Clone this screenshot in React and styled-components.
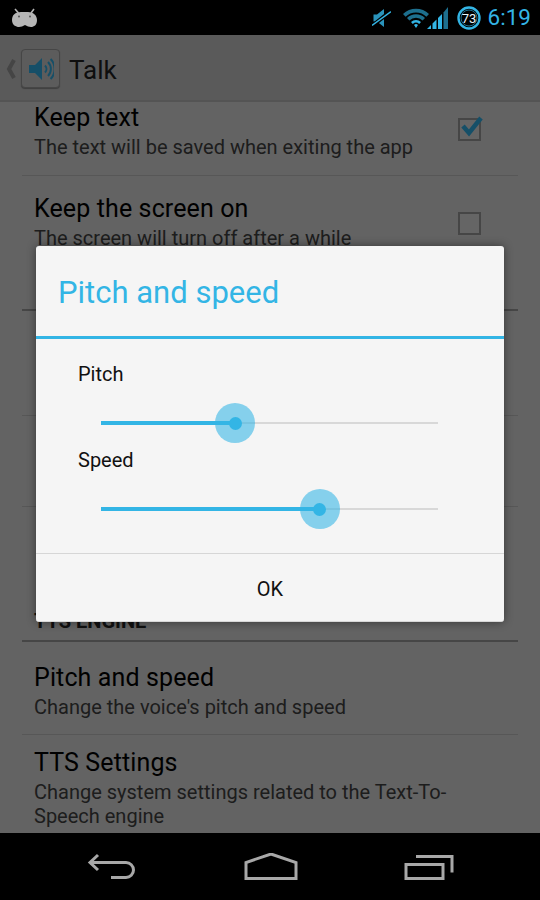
import React from 'react'
import styled, { createGlobalStyle } from 'styled-components'

const BLUE = '#33b5e5'

const GlobalStyle = createGlobalStyle`
  html, body {
    margin: 0;
    padding: 0;
    background: #000;
  }
  * {
    box-sizing: border-box;
  }
`

const Phone = styled.div`
  width: 540px;
  height: 900px;
  display: flex;
  flex-direction: column;
  overflow: hidden;
  font-family: Roboto, "Liberation Sans", sans-serif;
  color: #000;
`

const StatusBar = styled.div`
  flex: none;
  height: 35px;
  background: #000;
  display: flex;
  align-items: center;
  padding: 0 9px 0 12px;
`

const StatusIcons = styled.div`
  margin-left: auto;
  display: flex;
  align-items: center;
`

const StatusGlyph = styled.svg`
  display: block;
  flex: none;
  margin-left: ${(p) => p.$gap || 0}px;
`

const Clock = styled.span`
  margin-left: 7px;
  font-size: 22.5px;
  line-height: 35px;
  color: ${BLUE};
`

const Screen = styled.div`
  flex: 1;
  min-height: 0;
  position: relative;
  display: flex;
  flex-direction: column;
  background: #c6c6c6;
`

const ActionBar = styled.div`
  flex: none;
  height: 67px;
  display: flex;
  align-items: center;
  padding: 2px 0 0 6px;
  background: #b4b4b4;
  border-bottom: 2px solid #a8a8a8;
`

const UpChevron = styled.svg`
  display: block;
  flex: none;
  margin-right: 5px;
`

const AppIcon = styled.div`
  width: 39px;
  height: 39px;
  flex: none;
  display: flex;
  align-items: center;
  justify-content: center;
  background: #b8b8b8;
  border: 1px solid #8c8c8c;
  border-radius: 4px;
  box-shadow: 0 1px 1px rgba(0, 0, 0, 0.3);
`

const AppTitle = styled.div`
  margin-left: 9px;
  padding-top: 2px;
  font-size: 26px;
  color: #1c1c1c;
`

const List = styled.div`
  flex: 1;
  min-height: 0;
  overflow: hidden;
  padding: 0 22px;
`

const ScrolledContent = styled.div`
  margin-top: -17px;
`

const Row = styled.div`
  display: flex;
  align-items: flex-start;
  height: ${(p) => p.$height}px;
  padding: ${(p) => p.$top}px 12px 0;
  border-bottom: 1px solid ${(p) => (p.$last ? 'transparent' : '#aeaeae')};
`

const RowText = styled.div`
  flex: 1;
  min-width: 0;
`

const RowTitle = styled.div`
  font-size: 25px;
  letter-spacing: 0.12px;
  line-height: 34px;
`

const RowSub = styled.div`
  font-size: 20px;
  line-height: 24px;
  color: #3a3a3a;
  max-width: 440px;
`

const CheckBox = styled.div`
  position: relative;
  flex: none;
  width: 23px;
  height: 23px;
  margin: ${(p) => p.$top}px 25px 0 0;
  border: 2px solid #8d8d8d;
  background: rgba(255, 255, 255, 0.08);
`

const CheckMark = styled.svg`
  position: absolute;
  left: 0;
  top: -8px;
`

const SectionHeader = styled.div`
  height: ${(p) => p.$height}px;
  display: flex;
  align-items: flex-end;
  padding: 0 12px 7px;
  font-size: 20px;
  font-weight: 700;
  line-height: 24px;
  color: #222;
  border-bottom: 2px solid #8c8c8c;
`

const Scrim = styled.div`
  position: absolute;
  inset: 0;
  display: flex;
  align-items: center;
  justify-content: center;
  background: rgba(0, 0, 0, 0.5);
`

const Dialog = styled.div`
  width: 468px;
  height: 376px;
  display: flex;
  flex-direction: column;
  background: #f5f5f5;
  border-radius: 3px;
  border-bottom: 1px solid #d8d8d8;
  box-shadow: 0 0 10px rgba(0, 0, 0, 0.45);
`

const DialogTitle = styled.div`
  flex: none;
  height: 93px;
  padding: 3px 22px 0;
  display: flex;
  align-items: center;
  font-size: 31px;
  color: ${BLUE};
  border-bottom: 3px solid ${BLUE};
`

const DialogBody = styled.div`
  flex: 1;
  padding: 21px 66px 0 42px;
  border-bottom: 1px solid #d6d6d6;
`

const SliderLabel = styled.div`
  font-size: 20px;
  line-height: 28px;
  color: #111;
`

const SliderBox = styled.div`
  height: 58px;
  margin-left: 23px;
  padding-top: 34px;
`

const Track = styled.div`
  position: relative;
  width: 100%;
  height: 2px;
  background: #d8d8d8;
`

const TrackFill = styled.div`
  position: absolute;
  left: 0;
  top: -1px;
  height: 4px;
  background: ${BLUE};
`

const Thumb = styled.div`
  position: absolute;
  top: 1px;
  width: 40px;
  height: 40px;
  margin: -20px 0 0 -20px;
  border-radius: 50%;
  background: rgba(51, 181, 229, 0.58);
  display: flex;
  align-items: center;
  justify-content: center;
  &::after {
    content: '';
    width: 13px;
    height: 13px;
    border-radius: 50%;
    background: ${BLUE};
  }
`

const OkButton = styled.div`
  flex: none;
  height: 67px;
  padding-top: 2px;
  display: flex;
  align-items: center;
  justify-content: center;
  font-size: 20px;
  color: #111;
`

const NavBar = styled.div`
  flex: none;
  height: 67px;
  background: #000;
  display: flex;
  align-items: flex-start;
  padding: 20px 0 0 86px;
`

const NavGlyph = styled.svg`
  display: block;
  flex: none;
  margin-left: ${(p) => p.$gap || 0}px;
  fill: none;
  stroke: #a8a8a8;
  stroke-width: 3;
`

const Speaker = () => (
  <svg width="26" height="26" viewBox="0 0 26 26">
    <path d="M1 9h6l7-7v22l-7-7H1z" fill="#2c9fd0" />
    <path d="M17 9.5a5 5 0 0 1 0 7" fill="none" stroke="#2c9fd0" strokeWidth="2" />
    <path d="M20 6a10 10 0 0 1 0 14" fill="none" stroke="#2c9fd0" strokeWidth="2" />
    <path d="M22.6 3a14.5 14.5 0 0 1 0 20" fill="none" stroke="#2c9fd0" strokeWidth="2" />
  </svg>
)

const Slider = ({ label, value }) => (
  <>
    <SliderLabel>{label}</SliderLabel>
    <SliderBox>
      <Track>
        <TrackFill style={{ width: `${value}%` }} />
        <Thumb style={{ left: `${value}%` }} />
      </Track>
    </SliderBox>
  </>
)

const App = () => (
  <Phone>
    <GlobalStyle />
    <StatusBar>
      <StatusGlyph width="26" height="20" viewBox="0 0 26 20">
        <path d="M3 1l3.5 4M22 1l-3 4" stroke="#b5b5b5" strokeWidth="1.6" />
        <path d="M9 4h7c5 0 9 3 9 8s-3 7-6 7c-2 0-4-1-6-2-2 1-4 2-6 2-3 0-7-2-7-7s3-8 9-8z" fill="#b5b5b5" />
        <circle cx="7" cy="8.5" r="1" fill="#555" />
        <circle cx="18" cy="8.5" r="1" fill="#555" />
      </StatusGlyph>
      <StatusIcons>
        <StatusGlyph width="19" height="18" viewBox="0 0 19 18">
          <path d="M1.5 5.5h3.5L12 0v18l-7-5.5H1.5z" fill="#2a93bb" />
          <path d="M0 17L19 2" stroke="#000" strokeWidth="4" />
          <path d="M0 16.5L19 2.5" stroke="#33b5e5" strokeWidth="1.5" />
        </StatusGlyph>
        <StatusGlyph $gap={12} width="26" height="21" viewBox="0 0 26 21">
          <path d="M0 7a18.5 18.5 0 0 1 26 0l-2.6 2.8a14.6 14.6 0 0 0-20.8 0z" fill="#1d6f8e" />
          <path d="M4 11a12.8 12.8 0 0 1 18 0l-2.4 2.5a9.4 9.4 0 0 0-13.2 0z" fill="#1d6f8e" />
          <path d="M8 15a7.4 7.4 0 0 1 10 0l-1.8 1.9a4.8 4.8 0 0 0-6.4 0z" fill="#33b5e5" />
          <path d="M11 18a3 3 0 0 1 4 0l-2 3z" fill="#33b5e5" />
        </StatusGlyph>
        <StatusGlyph $gap={-2} width="22" height="22" viewBox="0 0 22 22">
          <path d="M0 22l4-4v4zM5.5 22v-5.5l4-4V22zM11 22V11l4-4v15z" fill="#33b5e5" />
          <path d="M16.5 22V5.5L21 0v22z" fill="#1d6f8e" />
        </StatusGlyph>
        <StatusGlyph $gap={8} width="24" height="24" viewBox="0 0 24 24">
          <circle cx="12" cy="12" r="10.5" fill="none" stroke="#33b5e5" strokeWidth="2.4" />
          <circle cx="12" cy="12" r="8" fill="none" stroke="#1d6f8e" strokeWidth="1" />
          <text x="12" y="16.5" fontSize="13" fontFamily="Roboto, sans-serif" fill="#e8f6fc" textAnchor="middle">73</text>
        </StatusGlyph>
        <Clock>6:19</Clock>
      </StatusIcons>
    </StatusBar>

    <Screen>
      <ActionBar>
        <UpChevron width="10" height="20" viewBox="0 0 10 20">
          <path d="M8 1L3 10l5 9" fill="none" stroke="#8a8a8a" strokeWidth="4" />
        </UpChevron>
        <AppIcon>
          <Speaker />
        </AppIcon>
        <AppTitle>Talk</AppTitle>
      </ActionBar>

      <List>
        <ScrolledContent>
          <Row $height={91} $top={16}>
            <RowText>
              <RowTitle>Keep text</RowTitle>
              <RowSub>The text will be saved when exiting the app</RowSub>
            </RowText>
            <CheckBox $top={17}>
              <CheckMark width="26" height="28" viewBox="0 0 26 28">
                <path d="M3 14l6 7L21 6" fill="none" stroke="#2a9fd0" strokeWidth="4.5" />
              </CheckMark>
            </CheckBox>
          </Row>
          <Row $height={91} $top={16} $last>
            <RowText>
              <RowTitle>Keep the screen on</RowTitle>
              <RowSub>The screen will turn off after a while</RowSub>
            </RowText>
            <CheckBox $top={20} />
          </Row>
          <SectionHeader $height={44} />
          <Row $height={105} $top={10} />
          <Row $height={91} $top={16} />
          <Row $height={85} $top={16} $last />
          <SectionHeader $height={50}>TTS ENGINE</SectionHeader>
          <Row $height={93} $top={19}>
            <RowText>
              <RowTitle>Pitch and speed</RowTitle>
              <RowSub>Change the voice's pitch and speed</RowSub>
            </RowText>
          </Row>
          <Row $height={102} $top={11}>
            <RowText>
              <RowTitle>TTS Settings</RowTitle>
              <RowSub>Change system settings related to the Text-To-Speech engine</RowSub>
            </RowText>
          </Row>
        </ScrolledContent>
      </List>

      <Scrim>
        <Dialog>
          <DialogTitle>Pitch and speed</DialogTitle>
          <DialogBody>
            <Slider label="Pitch" value={39.8} />
            <Slider label="Speed" value={64.9} />
          </DialogBody>
          <OkButton>OK</OkButton>
        </Dialog>
      </Scrim>
    </Screen>

    <NavBar>
      <NavGlyph width="50" height="30" viewBox="0 0 50 30">
        <path d="M12 2L4 9.5l8 7.5M4 9.5h36a7 7 0 0 1 0 15H25" />
      </NavGlyph>
      <NavGlyph $gap={108} width="54" height="30" viewBox="0 0 54 30">
        <path d="M2 25.5V9.5L27 1l25 8.5v16z" />
      </NavGlyph>
      <NavGlyph $gap={106} width="50" height="30" viewBox="0 0 50 30">
        <path d="M2 11.5h37v14H2zM12 3.5h36v16" />
      </NavGlyph>
    </NavBar>
  </Phone>
)

export default App
